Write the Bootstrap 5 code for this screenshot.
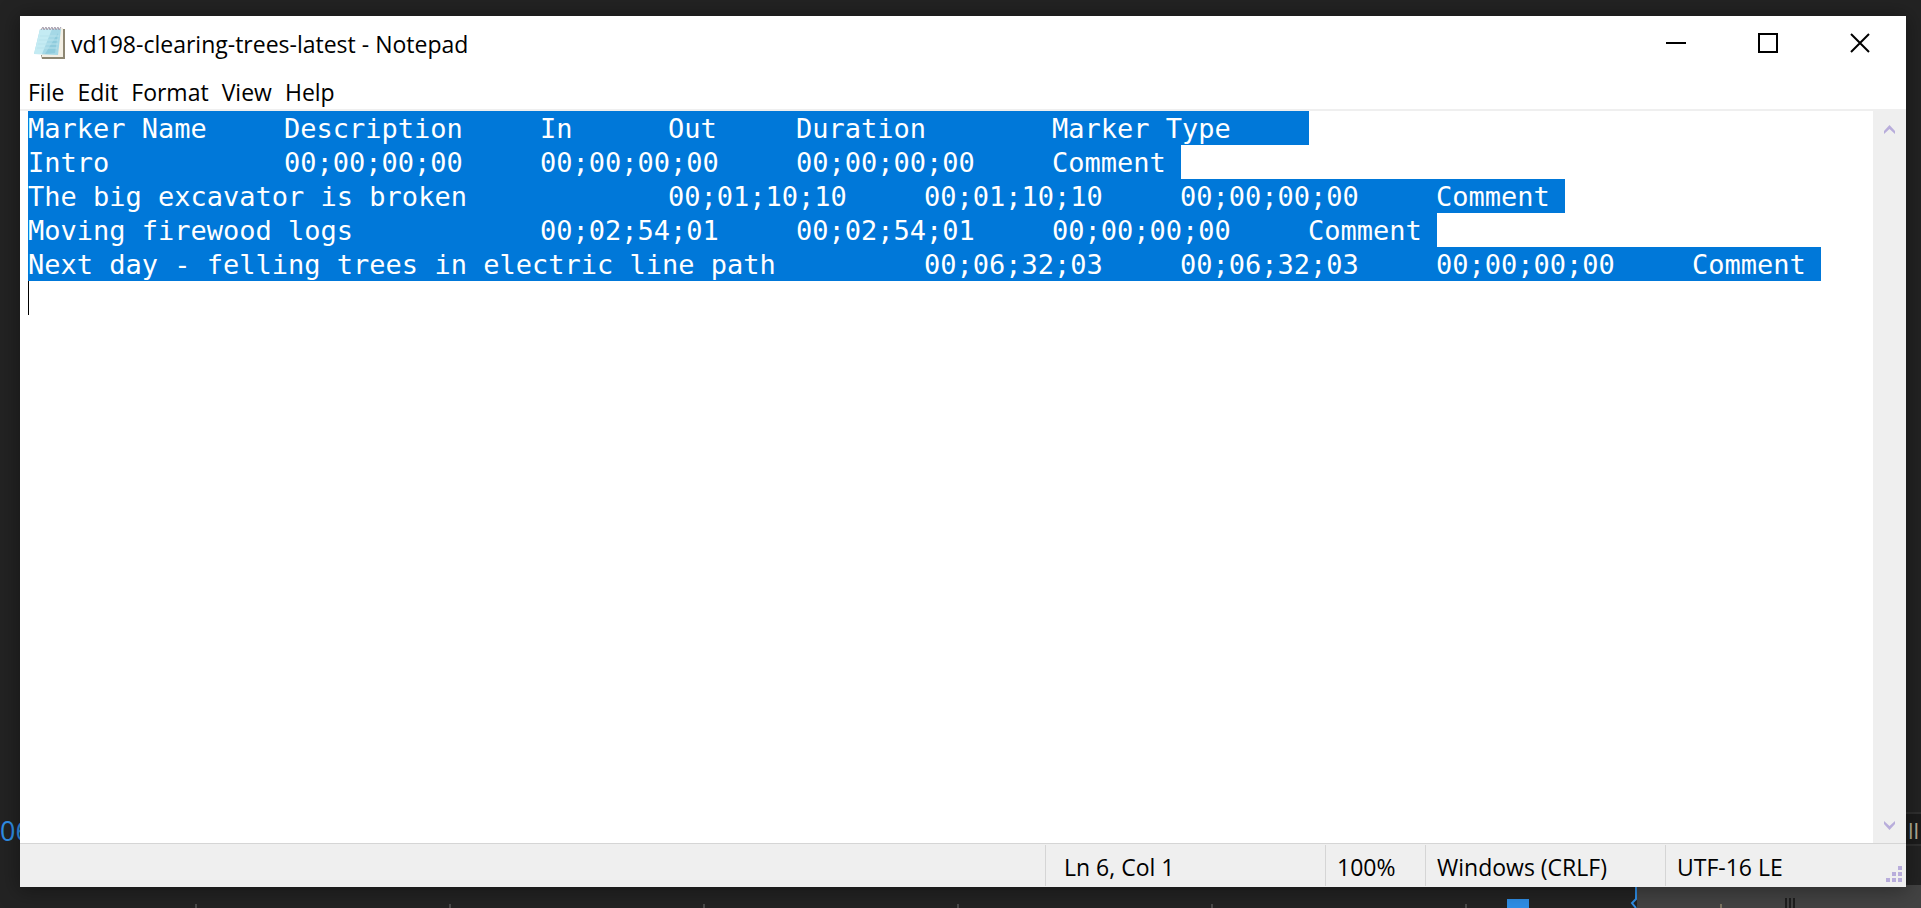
<!DOCTYPE html>
<html lang="en">
<head>
<meta charset="utf-8">
<meta name="viewport" content="width=device-width, initial-scale=1">
<title>vd198-clearing-trees-latest - Notepad</title>
<link href="https://cdn.jsdelivr.net/npm/bootstrap@5.3.0/dist/css/bootstrap.min.css" rel="stylesheet">
<style>
  :root { --face: #efefef; --line: #d5d5d5; --select: #0078d9; --accent: #2f8fe8; }
  body { background: #232323; color: #000; font-family: "Open Sans", "Noto Sans", sans-serif; font-size: 23px; line-height: 32px; }

  /* video editor behind the window */
  .timecode { height: 70px; color: var(--accent); font-size: 27px; font-weight: 500; }
  .panel-button { width: 32px; height: 34px; margin-bottom: 39px; background: #1c1c1c; border: 2px solid #303030; border-width: 2px 0; color: #b5b09a; font-size: 22px; line-height: 32px; padding-right: 2px; }
  .track { height: 23px; }
  .ruler { background: repeating-linear-gradient(90deg, transparent 0 195px, #4a4a4a 195px 197px, transparent 197px 254px) 0 100% / 254px 4px repeat-x; }
  .marker { width: 22px; height: 9px; background: var(--accent); margin-right: 101px; }
  .clip { width: 284px; background: #434343; }

  /* window */
  .window { margin: 16px 15px 21px 20px; background: #fff; box-shadow: 0 2px 20px 2px rgba(0, 0, 0, .35); }
  .titlebar { height: 58px; padding-left: 13px; }
  .doc-title { font-size: 23px; line-height: 32px; padding: 2px 0 0 4px; }
  .caption-btn { width: 92px; height: 54px; border: 0; background: none; padding: 0; }
  .caption-btn:hover { background: #e5e5e5; }
  .menus { height: 35px; padding-left: 8px; gap: 13px; }
  .menus a { color: #000; text-decoration: none; }
  .editor { border-top: 2px solid var(--face); min-height: 0; }
  .document {
    border: 0; padding: 1px 0 0; margin-left: 8px; min-width: 0; resize: none; outline: 0; overflow: hidden;
    color: #fff; font: 27px/34px "DejaVu Sans Mono", monospace; tab-size: 128px; white-space: pre;
    background-color: #fff;
    background-image:
      linear-gradient(var(--select), var(--select)), linear-gradient(var(--select), var(--select)),
      linear-gradient(var(--select), var(--select)), linear-gradient(var(--select), var(--select)),
      linear-gradient(var(--select), var(--select)), linear-gradient(#000, #000);
    background-position: 0 0, 0 34px, 0 68px, 0 102px, 0 136px, 0 170px;
    background-size: 1281px 34px, 1153px 34px, 1537px 34px, 1409px 34px, 1793px 34px, 1px 34px;
    background-repeat: no-repeat;
  }
  .scroller { width: 33px; background: var(--face); }
  .scroller button { height: 36px; border: 0; background: none; padding: 0; }
  .status { height: 44px; background: var(--face); border-top: 1px solid var(--line); padding: 1px 0; }
  .cell { border-left: 1px solid var(--line); padding-left: 11px; line-height: 44px; white-space: nowrap; }
  .cell-pos { width: 280px; padding-left: 18px; }
  .cell-zoom { width: 100px; }
  .cell-eol { width: 240px; }
  .cell-enc { width: 241px; }
</style>
</head>
<body class="vh-100 overflow-hidden position-relative">

<div class="position-absolute top-0 start-0 w-100 h-100 d-flex flex-column justify-content-end" aria-hidden="true">
  <div class="d-flex justify-content-between align-items-end">
    <span class="timecode">06</span>
    <span class="panel-button text-end">ll</span>
  </div>
  <div class="track d-flex">
    <div class="ruler flex-fill d-flex justify-content-end align-items-end">
      <div class="marker"></div>
      <svg width="7" height="23" viewBox="0 0 7 23"><path d="M6 0v14L2 18l4 5" fill="none" stroke="#2f8fe8" stroke-width="2"/></svg>
    </div>
    <svg class="clip" height="23" viewBox="0 0 284 23"><path d="M84 19v4" stroke="#7d7562" stroke-width="2"/><path d="M149 13v10M153 13v10M157 13v10" stroke="#1e1e1e" stroke-width="2"/></svg>
  </div>
</div>

<div class="vh-100 d-flex">
  <main class="window flex-fill d-flex flex-column position-relative">
    <header class="titlebar d-flex align-items-start">
      <div class="d-flex align-items-center flex-fill pt-2">
        <svg width="34" height="38" viewBox="0 0 34 38" aria-hidden="true">
          <path d="M8 31h22V5h2v30H9z" fill="#8d8672"/>
          <path d="M8 4h22v29H9z" fill="#f3efe4"/>
          <path d="M7 5h21l-3 26-24-1z" fill="#a5d8e6"/>
          <path d="M7 5h12L9 30l-8 0z" fill="#c4ebf3"/>
          <path d="M25 9l-3 20-10 1z" fill="#8fcbdc"/>
          <path d="M7 12h19M6 16h19M5 20h20M4 24h20" stroke="#b9e3ec"/>
          <path d="M8 6l2-3 1 3 2-3 1 3 2-3 1 3 2-3 1 3 2-3 1 3 2-3 1 3 2-3" fill="none" stroke="#a49cae"/>
        </svg>
        <h1 class="doc-title m-0 fw-normal">vd198-clearing-trees-latest - Notepad</h1>
      </div>
      <button class="caption-btn" type="button" aria-label="Minimize"><svg class="d-block mx-auto" width="20" height="20" viewBox="0 0 20 20"><path d="M0 10h20" stroke="#000" stroke-width="2"/></svg></button>
      <button class="caption-btn" type="button" aria-label="Maximize"><svg class="d-block mx-auto" width="20" height="20" viewBox="0 0 20 20"><path d="M1 1h18v18H1z" fill="none" stroke="#000" stroke-width="2"/></svg></button>
      <button class="caption-btn" type="button" aria-label="Close"><svg class="d-block mx-auto" width="20" height="20" viewBox="0 0 20 20"><path d="M1 1l18 18M19 1L1 19" stroke="#000" stroke-width="2"/></svg></button>
    </header>
    <nav class="menus d-flex align-items-center" aria-label="Menu bar">
      <a href="#">File</a><a href="#">Edit</a><a href="#">Format</a><a href="#">View</a><a href="#">Help</a>
    </nav>
    <div class="editor flex-fill d-flex">
      <textarea class="document flex-fill" wrap="off" spellcheck="false" aria-label="Text editor">Marker Name&#9;Description&#9;In&#9;Out&#9;Duration&#9;Marker Type&#9;
Intro&#9;&#9;00;00;00;00&#9;00;00;00;00&#9;00;00;00;00&#9;Comment&#9;
The big excavator is broken&#9;&#9;00;01;10;10&#9;00;01;10;10&#9;00;00;00;00&#9;Comment&#9;
Moving firewood logs&#9;&#9;00;02;54;01&#9;00;02;54;01&#9;00;00;00;00&#9;Comment&#9;
Next day - felling trees in electric line path&#9;&#9;00;06;32;03&#9;00;06;32;03&#9;00;00;00;00&#9;Comment&#9;
</textarea>
      <div class="scroller d-flex flex-column justify-content-between">
        <button type="button" aria-label="Scroll up"><svg class="d-block mx-auto" width="11" height="9" viewBox="0 0 11 9"><path d="M0 6l5.500-6L11 6v3L5.500 4 0 9z" fill="#b8addb"/></svg></button>
        <button type="button" aria-label="Scroll down"><svg class="d-block mx-auto" width="11" height="9" viewBox="0 0 11 9"><path d="M0 3l5.500 6L11 3V0L5.500 5 0 0z" fill="#b8addb"/></svg></button>
      </div>
    </div>
    <footer class="status d-flex justify-content-end">
      <div class="cell cell-pos">Ln 6, Col 1</div>
      <div class="cell cell-zoom">100%</div>
      <div class="cell cell-eol">Windows (CRLF)</div>
      <div class="cell cell-enc d-flex justify-content-between"><span>UTF-16 LE</span>
        <svg class="align-self-end me-1 mb-1" width="16" height="16" viewBox="0 0 16 16" aria-hidden="true"><path d="M12 0h4v4h-4zM6 6h4v4H6zM12 6h4v4h-4zM0 12h4v4H0zM6 12h4v4H6zM12 12h4v4h-4z" fill="#b8addb"/></svg>
      </div>
    </footer>
  </main>
</div>

<script src="https://cdn.jsdelivr.net/npm/bootstrap@5.3.0/dist/js/bootstrap.bundle.min.js"></script>
</body>
</html>
